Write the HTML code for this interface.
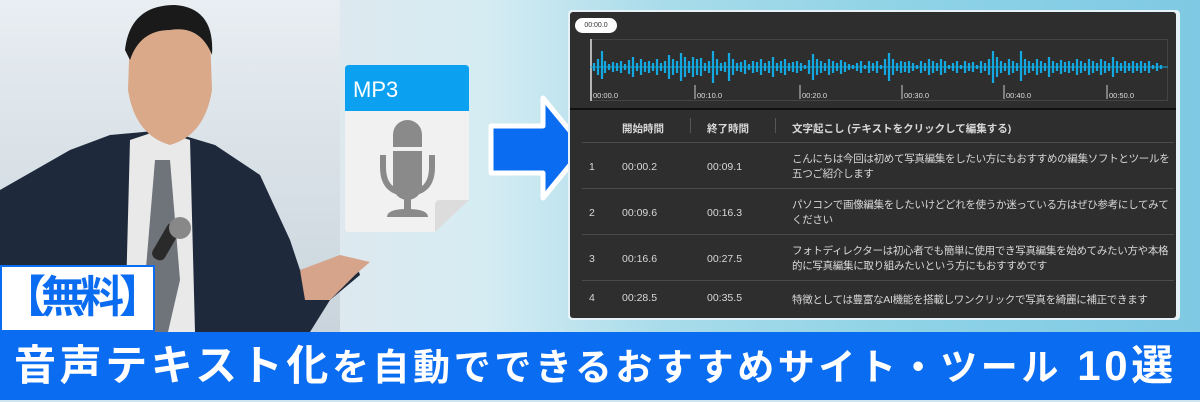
<!DOCTYPE html>
<html><head><meta charset="utf-8"><style>
*{margin:0;padding:0;box-sizing:border-box}
body{width:1200px;height:400px;overflow:hidden;position:relative;font-family:"Liberation Sans","Noto Sans CJK JP",sans-serif;background:#cfe6f0}
.bg{position:absolute;inset:0;background:linear-gradient(90deg,#b9c8d4 0%,#dfe8ee 25%,#d6ecf3 40%,#a9dcea 55%,#8fd3e6 75%,#7fc9e4 100%)}
.win{position:absolute;left:0;top:0;width:340px;height:332px;background:linear-gradient(180deg,#e8eef2,#c9d4dc)}
.panel{position:absolute;left:568px;top:10px;width:612px;height:310px;background:#e6f2f8;border-radius:4px}
.inner{position:absolute;left:570px;top:12px;width:606px;height:306px;background:#2e2e2e;border-radius:3px;color:#d8d8d8;font-size:10.5px;overflow:hidden}
.row{position:absolute;left:12px;width:592px;border-top:1px solid #4a4a4a}
.c{position:absolute;white-space:nowrap}
.t{position:absolute;left:222px;width:378px;line-height:15px;letter-spacing:-0.3px}
.bar{position:absolute;left:0;top:332px;width:1200px;height:68px;background:#0a6cf0;color:#fff;font-weight:bold;font-size:42px;line-height:68px;padding-left:14px;letter-spacing:3.6px;white-space:nowrap}
.lab{position:absolute;left:0;top:265px;width:155px;height:67px;background:#fff;border:2px solid #0a6cf0;color:#0a6cf0;font-weight:bold;font-size:44px;line-height:62px;text-align:center;white-space:nowrap;letter-spacing:-5px;overflow:hidden}
</style></head><body>
<div class="bg"></div>
<div class="win"></div>
<svg style="position:absolute;left:0;top:0" width="560" height="332">
<path d="M0 190 L70 150 L110 135 L165 130 L215 145 L260 175 L290 240 L300 270 L330 262 L355 260 L360 275 L330 300 L310 332 L0 332 Z" fill="#1e2a3c"/>
<path d="M130 140 L160 130 L190 140 L195 332 L125 332 Z" fill="#e9e9ea"/>
<path d="M155 160 L170 160 L180 280 L168 332 L150 332 L145 280 Z" fill="#6f747a"/>
<path d="M130 30 Q175 -5 210 35 L212 90 Q205 135 170 145 Q135 135 128 90 Z" fill="#d9a98a"/>
<path d="M125 50 Q130 5 175 5 Q215 8 212 55 Q200 25 170 30 Q140 30 130 60 Z" fill="#1a1a1a"/>
<path d="M300 270 L340 255 L370 262 L355 275 L330 300 L305 300 Z" fill="#d6a48a"/>
<rect x="160" y="222" width="14" height="40" rx="6" fill="#2a2a2a" transform="rotate(30 167 240)"/>
<ellipse cx="180" cy="228" rx="11" ry="11" fill="#888"/>
</svg>
<svg style="position:absolute;left:345px;top:65px" width="125" height="168">
<path d="M0 4 Q0 0 4 0 L120 0 Q124 0 124 4 L124 135 L90 167 L4 167 Q0 167 0 163Z" fill="#f1f1f1"/>
<path d="M0 4 Q0 0 4 0 L120 0 Q124 0 124 4 L124 46 L0 46Z" fill="#0ba0f0"/>
<path d="M124 135 L95 135 Q90 135 90 140 L90 167Z" fill="#dcdcdc"/>
<text x="8" y="32" font-family="Liberation Sans" font-size="22" fill="#fff">MP3</text>
<rect x="48" y="55" width="29" height="80" rx="14.5" fill="#8a8a8a"/>
<rect x="48" y="82" width="29" height="4" fill="#f1f1f1"/>
<path d="M38 90 L38 102 Q38 128 62.5 128 Q87 128 87 102 L87 90" fill="none" stroke="#8a8a8a" stroke-width="6"/>
<rect x="59" y="128" width="7" height="18" fill="#8a8a8a"/>
<path d="M42 152 Q42 144 62 144 Q83 144 83 152Z" fill="#8a8a8a"/>
</svg>
<svg style="position:absolute;left:486px;top:92px" width="105" height="112">
<path d="M5 34 L57 34 L57 6 L98 56 L57 106 L57 81 L5 81Z" fill="#0a6cf0" stroke="#fff" stroke-width="5" stroke-linejoin="round"/>
</svg>
<div class="panel"></div>
<div class="inner">
<div style="position:absolute;left:5px;top:6px;width:42px;height:15px;background:#fff;border-radius:8px;color:#333;font-size:7px;line-height:15px;text-align:center">00:00.0</div>
<div style="position:absolute;left:20px;top:27px;width:578px;height:62px;border:1px solid #444"></div>
<svg style="position:absolute;left:20px;top:27px" width="578" height="62">
<line x1="1" y1="0" x2="1" y2="62" stroke="#ddd" stroke-width="1.5"/>
<line x1="0" y1="28" x2="578" y2="28" stroke="#14a8e0" stroke-width="1"/>
<path stroke="#14a8e0" stroke-width="2.2" fill="none" d="M4 24v8M8 20v16M12 12v28M15 22v12M19 25v6M23 23v10M27 24v8M31 22v12M35 25v6M39 21v14M43 18v20M47 24v8M51 20v16M55 23v10M59 22v12M63 24v8M67 20v16M71 24v8M75 22v12M79 16v24M83 20v16M87 22v12M91 14v28M95 18v20M99 22v12M103 18v20M107 20v16M111 19v18M115 24v8M119 22v12M123 12v32M127 20v16M131 24v8M135 23v10M139 14v28M143 20v16M147 24v8M151 23v10M155 21v14M159 25v6M163 22v12M167 23v10M171 20v16M175 24v8M179 22v12M183 18v20M187 24v8M191 22v12M195 20v16M199 24v8M203 23v10M207 22v12M211 24v8M215 26v4M219 21v14M223 15v26M227 20v16M231 22v12M235 24v8M239 20v16M243 22v12M247 24v8M251 21v14M255 23v10M259 25v6M263 26v4M267 24v8M271 22v12M275 26v4M279 22v12M283 24v8M287 22v12M291 26v4M295 20v16M299 14v28M303 20v16M307 24v8M311 22v12M315 23v10M319 22v12M323 24v8M327 26v4M331 22v12M335 24v8M339 20v16M343 22v12M347 24v8M351 20v16M355 22v12M359 26v4M363 24v8M367 22v12M371 26v4M375 22v12M379 24v8M383 23v10M387 26v4M391 22v12M395 24v8M399 20v16M403 12v32M407 18v20M411 22v12M415 24v8M419 20v16M423 22v12M427 24v8M431 12v30M435 20v16M439 22v12M443 24v8M447 20v16M451 22v12M455 24v8M459 18v20M463 22v12M467 24v8M471 21v14M475 23v10M479 22v12M483 24v8M487 20v16M491 22v12M495 24v8M499 20v16M503 22v12M507 24v8M511 20v16M515 22v12M519 24v8M523 18v20M527 22v12M531 24v8M535 22v12M539 24v8M543 22v12M547 24v8M551 22v12M555 24v8M559 22v12M563 26v4M567 24v8M571 26v4"/>
<g stroke="#ccc"><line x1="105" y1="46" x2="105" y2="60"/><line x1="210" y1="46" x2="210" y2="60"/><line x1="312" y1="46" x2="312" y2="60"/><line x1="414" y1="46" x2="414" y2="60"/><line x1="517" y1="46" x2="517" y2="60"/></g>
<g font-family="Liberation Sans" font-size="7.5" fill="#ddd"><text x="3" y="59">00:00.0</text><text x="107" y="59">00:10.0</text><text x="212" y="59">00:20.0</text><text x="314" y="59">00:30.0</text><text x="416" y="59">00:40.0</text><text x="519" y="59">00:50.0</text></g>
</svg>
<div style="position:absolute;left:0;top:96px;width:606px;height:2px;background:#111"></div>
<div class="c" style="left:52px;top:109px;font-weight:bold">開始時間</div>
<div class="c" style="left:120px;top:106px;width:1px;height:15px;background:#555"></div>
<div class="c" style="left:137px;top:109px;font-weight:bold">終了時間</div>
<div class="c" style="left:205px;top:106px;width:1px;height:15px;background:#555"></div>
<div class="c" style="left:222px;top:109px;font-weight:bold">文字起こし (テキストをクリックして編集する)</div>
<div class="row" style="top:130px"></div>
<div class="c" style="left:19px;top:149px">1</div><div class="c" style="left:52px;top:149px">00:00.2</div><div class="c" style="left:137px;top:149px">00:09.1</div>
<div class="t" style="top:140px">こんにちは今回は初めて写真編集をしたい方にもおすすめの編集ソフトとツールを五つご紹介します</div>
<div class="row" style="top:176px"></div>
<div class="c" style="left:19px;top:195px">2</div><div class="c" style="left:52px;top:195px">00:09.6</div><div class="c" style="left:137px;top:195px">00:16.3</div>
<div class="t" style="top:186px">パソコンで画像編集をしたいけどどれを使うか迷っている方はぜひ参考にしてみてください</div>
<div class="row" style="top:222px"></div>
<div class="c" style="left:19px;top:241px">3</div><div class="c" style="left:52px;top:241px">00:16.6</div><div class="c" style="left:137px;top:241px">00:27.5</div>
<div class="t" style="top:232px">フォトディレクターは初心者でも簡単に使用でき写真編集を始めてみたい方や本格的に写真編集に取り組みたいという方にもおすすめです</div>
<div class="row" style="top:268px"></div>
<div class="c" style="left:19px;top:280px">4</div><div class="c" style="left:52px;top:280px">00:28.5</div><div class="c" style="left:137px;top:280px">00:35.5</div>
<div class="c" style="left:222px;top:280px;letter-spacing:-0.3px">特徴としては豊富なAI機能を搭載しワンクリックで写真を綺麗に補正できます</div>
</div>
<div class="lab">【無料】</div>
<div class="bar">音声テキスト化<span style="font-size:37px">を自動でできるおすすめサイト・ツール</span> 10選</div>
</body></html>
